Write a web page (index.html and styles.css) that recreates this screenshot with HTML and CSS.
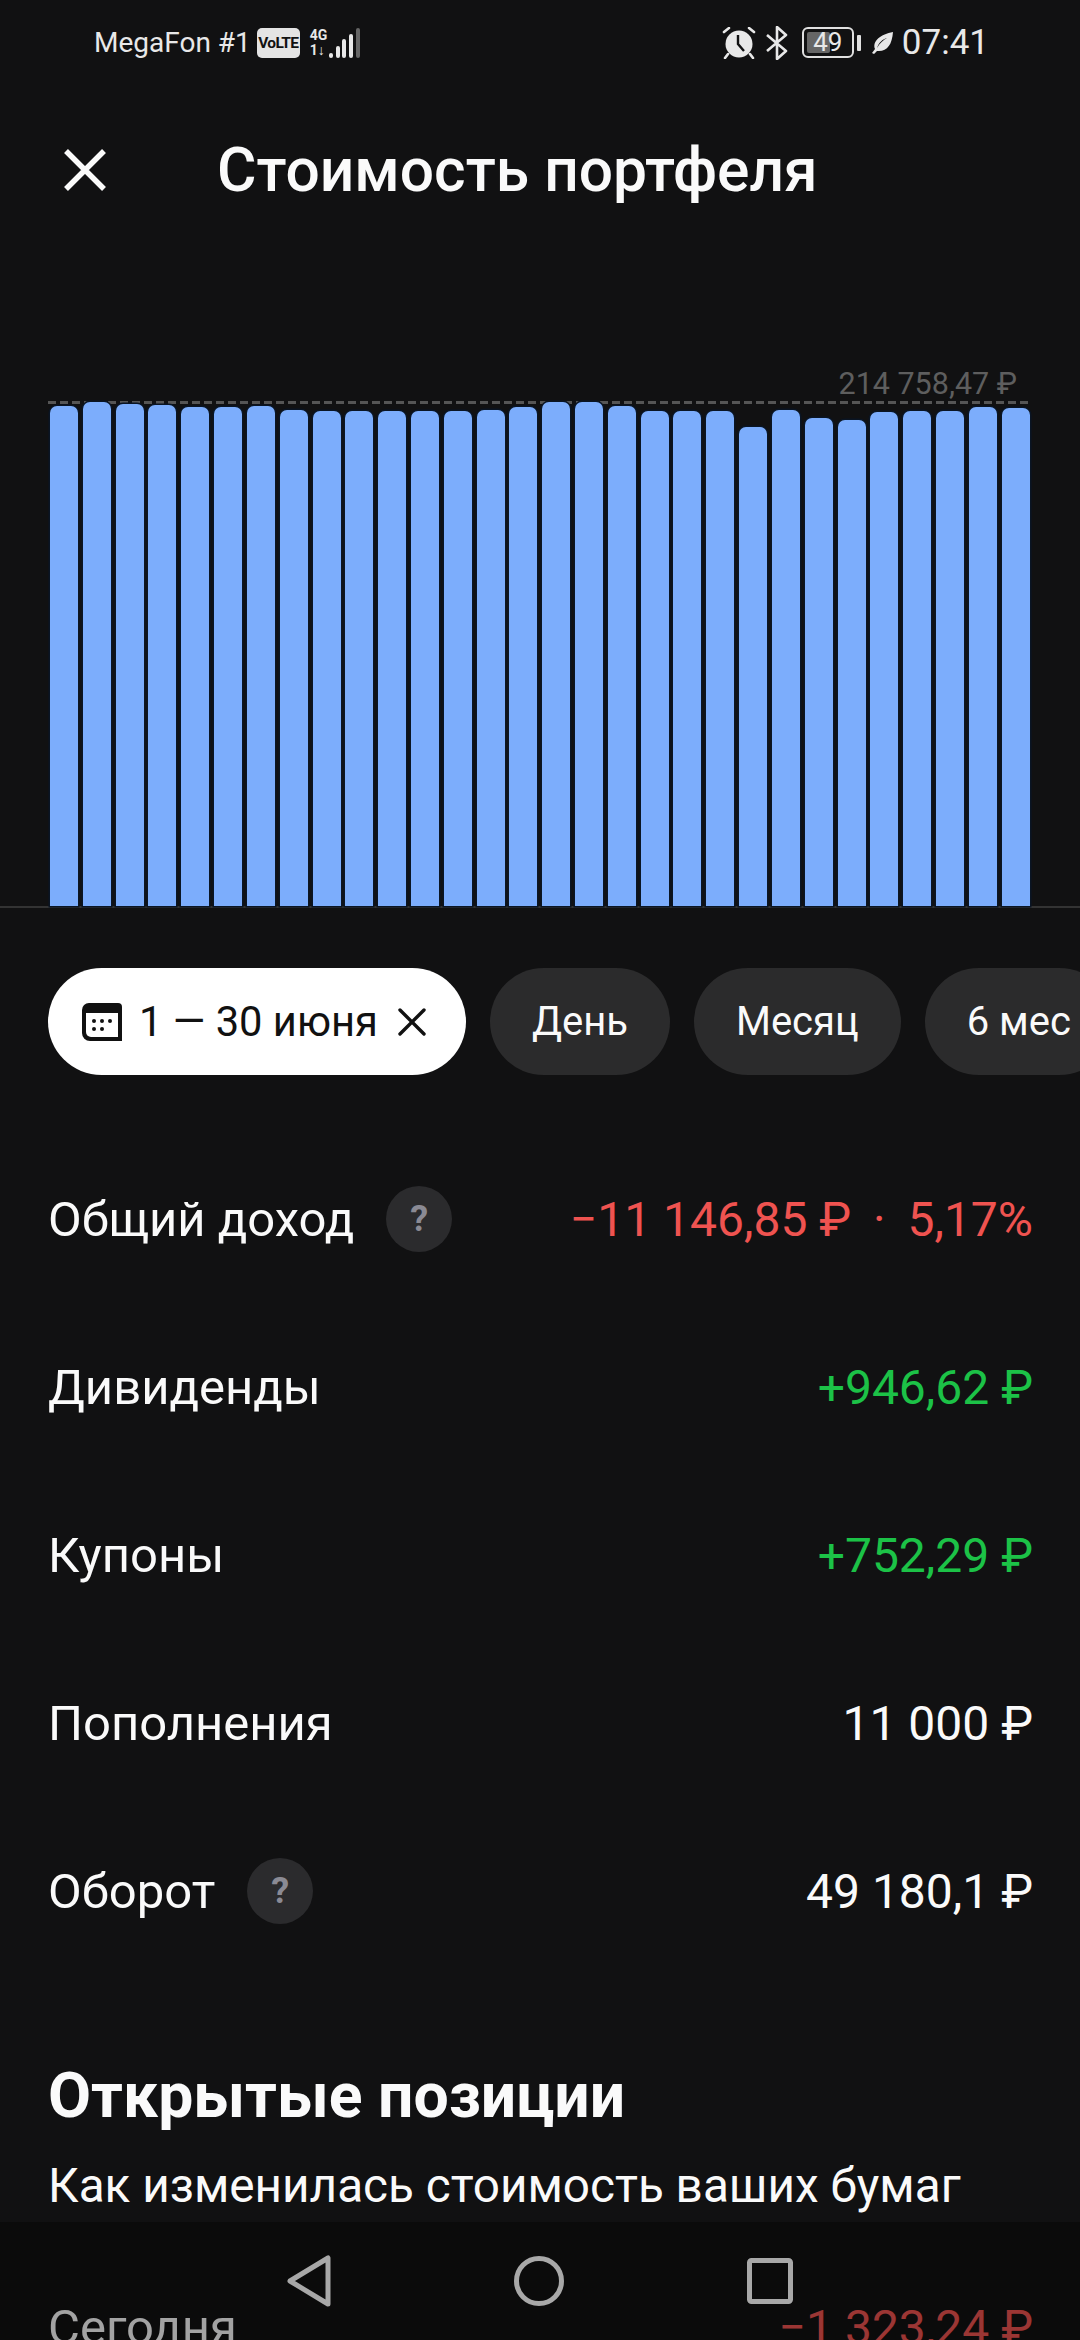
FILE: index.html
```html
<!DOCTYPE html>
<html lang="ru">
<head>
    <meta charset="UTF-8">
    <meta name="viewport" content="width=device-width, initial-scale=1.0">
    <title>Стоимость портфеля</title>
    <link rel="stylesheet" href="styles.css">
</head>
<body>
    <div class="screen">
        <div class="status-bar">
            <div class="status-left">
                <span class="carrier">MegaFon #1</span>
                <span class="volte">VoLTE</span>
                <span class="net-type">4G<br>1↓</span>
                <span class="signal">
                    <i class="s1"></i><i class="s2"></i><i class="s3"></i><i class="s4"></i><i class="s5"></i>
                </span>
            </div>
            <div class="status-right">
                <svg class="ic-alarm" width="34" height="32" viewBox="0 0 34 32">
                    <circle cx="17" cy="17" r="13.5" fill="#e8e8e8"/>
                    <path d="M16 8v9l6 7" fill="none" stroke="#111112" stroke-width="2.4"/>
                    <path d="M2 5l5-4M32 5l-5-4M6 27l-3 4M28 27l3 4" stroke="#e8e8e8" stroke-width="2.6" stroke-linecap="round"/>
                </svg>
                <svg class="ic-bt" width="22" height="34" viewBox="0 0 22 34">
                    <path d="M1 9l19 16-9 8V1l9 8L1 25" fill="none" stroke="#e8e8e8" stroke-width="2.6" stroke-linejoin="round"/>
                </svg>
                <div class="battery">
                    <div class="battery-body"><div class="battery-fill"></div><span class="battery-text">49</span></div>
                    <div class="battery-nub"></div>
                </div>
                <svg class="ic-leaf" width="23" height="24" viewBox="0 0 23 24">
                    <path d="M22 1C21 14 16 21 6 20l-3 3-2-1 3-4C1 10 10 3 22 1zM6 17C9 12 12 9 16 7 12 8 8 11 6 17z" fill="#e8e8e8" fill-rule="evenodd"/>
                </svg>
                <span class="clock">07:41</span>
            </div>
        </div>

        <div class="topbar">
            <svg class="close-icon" width="44" height="44" viewBox="0 0 44 44">
                <path d="M3 3l38 38M41 3L3 41" stroke="#fafafa" stroke-width="5.5"/>
            </svg>
            <h1 class="title">Стоимость портфеля</h1>
        </div>

        <div class="chart">
            <div class="chart-max">214 758,47 ₽</div>
            <div class="chart-plot">
                <div class="chart-maxline"></div>
                <div class="bars">
                    <div class="bar" style="height:500px"></div>
                    <div class="bar" style="height:504px"></div>
                    <div class="bar" style="height:502px"></div>
                    <div class="bar" style="height:501px"></div>
                    <div class="bar" style="height:499px"></div>
                    <div class="bar" style="height:499px"></div>
                    <div class="bar" style="height:500px"></div>
                    <div class="bar" style="height:496px"></div>
                    <div class="bar" style="height:495px"></div>
                    <div class="bar" style="height:495px"></div>
                    <div class="bar" style="height:495px"></div>
                    <div class="bar" style="height:495px"></div>
                    <div class="bar" style="height:495px"></div>
                    <div class="bar" style="height:496px"></div>
                    <div class="bar" style="height:499px"></div>
                    <div class="bar" style="height:504px"></div>
                    <div class="bar" style="height:504px"></div>
                    <div class="bar" style="height:500px"></div>
                    <div class="bar" style="height:495px"></div>
                    <div class="bar" style="height:495px"></div>
                    <div class="bar" style="height:495px"></div>
                    <div class="bar" style="height:479px"></div>
                    <div class="bar" style="height:496px"></div>
                    <div class="bar" style="height:488px"></div>
                    <div class="bar" style="height:486px"></div>
                    <div class="bar" style="height:494px"></div>
                    <div class="bar" style="height:495px"></div>
                    <div class="bar" style="height:495px"></div>
                    <div class="bar" style="height:499px"></div>
                    <div class="bar" style="height:498px"></div>
                </div>
            </div>
        </div>

        <div class="chips">
            <div class="chip chip-active">
                <svg width="40" height="38" viewBox="0 0 40 38">
                    <path d="M7 0h29a4 4 0 0 1 4 4v34H8a8 8 0 0 1-8-8V7a7 7 0 0 1 7-7z" fill="#111"/>
                    <path d="M4 10h32v24H9a5 5 0 0 1-5-5z" fill="#fff"/>
                    <circle cx="12" cy="18" r="2" fill="#111"/><circle cx="20" cy="18" r="2" fill="#111"/><circle cx="28" cy="18" r="2" fill="#111"/>
                    <circle cx="12" cy="26" r="2" fill="#111"/><circle cx="20" cy="26" r="2" fill="#111"/>
                </svg>
                <span class="chip-range">1 — 30 июня</span>
                <svg width="28" height="28" viewBox="0 0 28 28">
                    <path d="M2 2l24 24M26 2L2 26" stroke="#111" stroke-width="3.4" stroke-linecap="round"/>
                </svg>
            </div>
            <div class="chip">День</div>
            <div class="chip">Месяц</div>
            <div class="chip">6 мес</div>
        </div>

        <div class="stats">
            <div class="row">
                <div class="row-label">Общий доход <span class="hint">?</span></div>
                <div class="row-value negative">−11 146,85 ₽ <span class="sep">·</span> 5,17%</div>
            </div>
            <div class="row">
                <div class="row-label">Дивиденды</div>
                <div class="row-value positive">+946,62 ₽</div>
            </div>
            <div class="row">
                <div class="row-label">Купоны</div>
                <div class="row-value positive">+752,29 ₽</div>
            </div>
            <div class="row">
                <div class="row-label">Пополнения</div>
                <div class="row-value">11 000 ₽</div>
            </div>
            <div class="row">
                <div class="row-label">Оборот <span class="hint">?</span></div>
                <div class="row-value">49 180,1 ₽</div>
            </div>
        </div>

        <div class="positions">
            <h2>Открытые позиции</h2>
            <p>Как изменилась стоимость ваших бумаг</p>
            <div class="row">
                <div class="row-label">Сегодня</div>
                <div class="row-value negative">−1 323,24 ₽</div>
            </div>
        </div>

        <div class="nav-bar">
            <svg width="44" height="52" viewBox="0 0 44 52">
                <path d="M41 3v46L3 26z" fill="none" stroke="#a8a8a8" stroke-width="5" stroke-linejoin="round"/>
            </svg>
            <svg width="50" height="50" viewBox="0 0 50 50">
                <circle cx="25" cy="25" r="22.5" fill="none" stroke="#a8a8a8" stroke-width="5"/>
            </svg>
            <svg width="46" height="46" viewBox="0 0 46 46">
                <rect x="2.5" y="2.5" width="41" height="41" rx="2" fill="none" stroke="#a8a8a8" stroke-width="5"/>
            </svg>
        </div>
    </div>
</body>
</html>
```

FILE: styles.css
```css
html, body {
    margin: 0;
    padding: 0;
    background: #111112;
}
body {
    font-family: Roboto, "Noto Sans", sans-serif;
    color: #fafafa;
}
.screen {
    position: relative;
    width: 1080px;
    height: 2340px;
    overflow: hidden;
}

/* status bar */
.status-bar {
    height: 85px;
    padding: 0 91px 0 94px;
    display: flex;
    align-items: center;
    justify-content: space-between;
    color: #e8e8e8;
}
.status-left, .status-right {
    display: flex;
    align-items: center;
}
.carrier {
    font-size: 28px;
}
.volte {
    margin-left: 6px;
    width: 43px;
    height: 30px;
    line-height: 30px;
    border-radius: 5px;
    background: #e4e4e4;
    color: #111;
    font-size: 15.5px;
    font-weight: 700;
    text-align: center;
    letter-spacing: -0.7px;
}
.net-type {
    margin-left: 10px;
    width: 19px;
    font-size: 14px;
    font-weight: 700;
    line-height: 15px;
}
.signal {
    height: 30px;
    display: flex;
    align-items: flex-end;
    gap: 2.75px;
}
.signal i {
    display: block;
    width: 4px;
    background: #e8e8e8;
    border-radius: 2px;
}
.signal .s1 { height: 5px; }
.signal .s2 { height: 12px; }
.signal .s3 { height: 19px; }
.signal .s4 { height: 24px; }
.signal .s5 { height: 30px; background: #666; }
.ic-bt {
    margin-left: 10px;
}
.battery {
    margin-left: 14px;
    display: flex;
    align-items: center;
}
.battery-body {
    position: relative;
    width: 52px;
    height: 31px;
    box-sizing: border-box;
    border: 2.5px solid #e0e0e0;
    border-radius: 6px;
    padding: 3px;
}
.battery-fill {
    width: 23px;
    height: 100%;
    background: #666;
    border-radius: 2px;
}
.battery-text {
    position: absolute;
    left: 0;
    right: 0;
    top: 0;
    line-height: 26px;
    font-size: 26px;
    text-align: center;
}
.battery-nub {
    margin-left: 3px;
    width: 4px;
    height: 16px;
    background: #e0e0e0;
    border-radius: 1px;
}
.ic-leaf {
    margin-left: 10px;
}
.clock {
    margin-left: 8px;
    font-size: 35px;
}

/* header */
.topbar {
    height: 170px;
    padding-left: 63px;
    display: flex;
    align-items: center;
    gap: 110px;
}
.title {
    margin: 0;
    font-size: 60.5px;
    font-weight: 500;
}

/* chart */
.chart-max {
    margin-top: 110px;
    padding-right: 63px;
    height: 37px;
    line-height: 37px;
    text-align: right;
    font-size: 30.5px;
    color: #5e5e5e;
}
.chart-plot {
    position: relative;
    border-bottom: 2px solid #333;
}
.chart-maxline {
    position: absolute;
    left: 48px;
    right: 48px;
    top: -1px;
    height: 3px;
    background: repeating-linear-gradient(90deg, #555 0, #555 8px, transparent 8px, transparent 12px);
}
.bars {
    position: relative;
    height: 504px;
    padding: 0 50px;
    display: flex;
    align-items: flex-end;
    justify-content: space-between;
}
.bar {
    width: 28px;
    background: #7cadfc;
    border-radius: 7px 7px 0 0;
    box-shadow: 0 0 0 1.5px #0a1524;
}

/* chips */
.chips {
    margin-top: 60px;
    padding-left: 48px;
    display: flex;
    gap: 24px;
}
.chip {
    flex: none;
    height: 107px;
    padding: 0 42px;
    display: flex;
    align-items: center;
    border-radius: 54px;
    background: #2b2b2c;
    font-size: 40px;
}
.chip-active {
    padding: 0 40px 0 34px;
    gap: 17px;
    background: #fff;
    color: #111;
    font-size: 41.7px;
}
.chip-range {
    margin-right: 3px;
}

/* stats */
.stats {
    margin-top: 60px;
    height: 840px;
}
.row {
    height: 168px;
    padding: 0 47px 0 48px;
    display: flex;
    align-items: center;
    justify-content: space-between;
    font-size: 49px;
}
.row-label {
    display: flex;
    align-items: center;
    gap: 32px;
}
.row-value {
    font-size: 48px;
}
.hint {
    width: 66px;
    height: 66px;
    line-height: 66px;
    border-radius: 50%;
    background: #2b2b2d;
    color: #8a8a94;
    font-size: 36px;
    font-weight: 700;
    text-align: center;
}
.negative { color: #ef5350; }
.positive { color: #1cc247; }
.sep {
    margin: 0 10px;
}

/* open positions */
.positions h2 {
    margin: 86px 0 0;
    padding-left: 48px;
    height: 70px;
    line-height: 70px;
    font-size: 62.5px;
    font-weight: 700;
}
.positions p {
    margin: 25px 0 0;
    padding-left: 48px;
    height: 60px;
    line-height: 60px;
    font-size: 47.7px;
}
.positions .row {
    margin-top: 27px;
}

/* system navigation */
.nav-bar {
    position: absolute;
    left: 0;
    right: 0;
    bottom: 0;
    height: 118px;
    padding-left: 287px;
    display: flex;
    align-items: center;
    gap: 183px;
    background: rgba(0, 0, 0, 0.35);
}
```
